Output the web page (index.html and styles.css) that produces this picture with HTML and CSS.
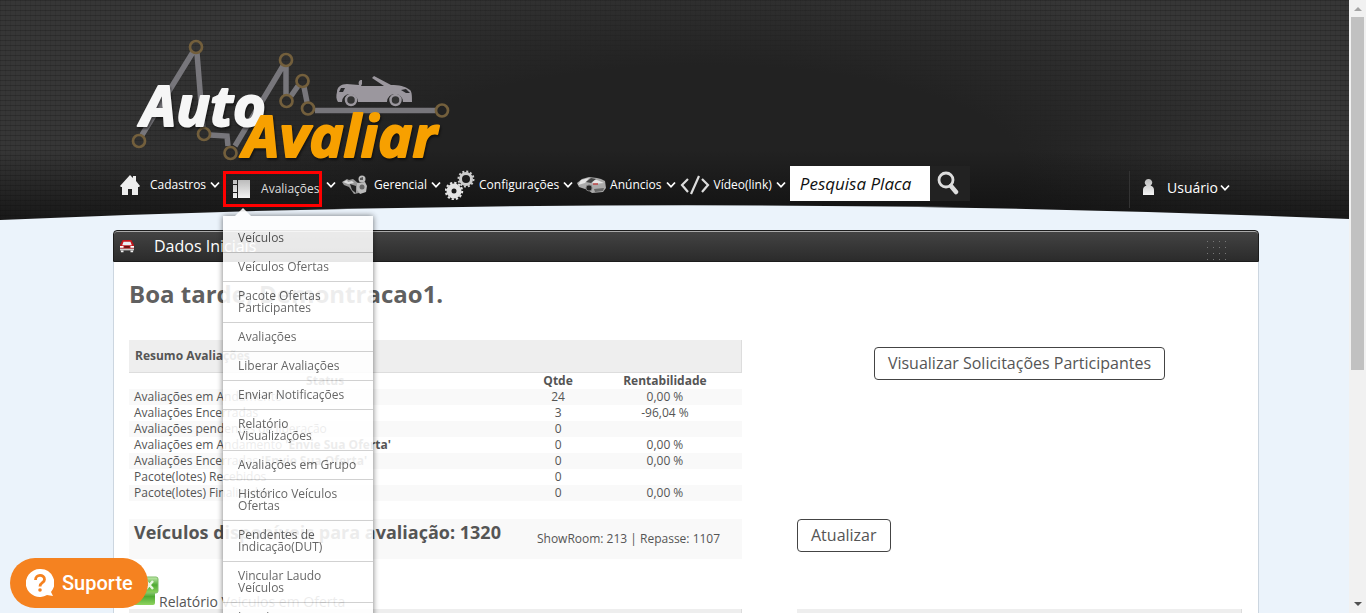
FILE: index.html
```html
<!DOCTYPE html>
<html lang="pt-BR">
<head>
<meta charset="utf-8">
<title>Auto Avaliar</title>
<link rel="stylesheet" href="styles.css">
</head>
<body>
<svg class="defs" width="0" height="0" aria-hidden="true">
  <defs>
    <linearGradient id="metal" x1="0" y1="0" x2="0" y2="1"><stop offset="0" stop-color="#bbb"/><stop offset="1" stop-color="#f4f4f4"/></linearGradient>
    <linearGradient id="green" x1="0" y1="0" x2="0" y2="1"><stop offset="0" stop-color="#c5ecb0"/><stop offset=".5" stop-color="#4faa33"/><stop offset="1" stop-color="#8fd45f"/></linearGradient>
    <symbol id="chev" viewBox="0 0 10 8"><path d="M1 1.5 5 5.8 9 1.5" fill="none" stroke="#fff" stroke-width="1.8"/></symbol>
  </defs>
</svg>
<div class="page">
  <header class="top">
    <svg class="curve" viewBox="0 0 1349 28" preserveAspectRatio="none" aria-hidden="true"><path d="M0 28Q675 -1 1349 27V28Z" fill="#ebf3fb"/></svg>
    <a class="logo" href="#" aria-label="Auto Avaliar">
      <svg width="340" height="135" viewBox="0 0 340 135">
        <g fill="none" stroke="#77767b" stroke-width="5.5">
          <path d="M22 105 73 22M77 23 83 98M90 105 107 106 108 116M115 116 163 36M166 36V66M171 66 178 56M184 57 187 72M195 80.500H315"/>
        </g>
        <g fill="none" stroke="#735f3c" stroke-width="2.700">
          <circle cx="19" cy="111" r="6"/><circle cx="76" cy="17" r="6"/><circle cx="84" cy="104" r="6"/><circle cx="110.500" cy="123" r="6"/><circle cx="166" cy="30" r="6"/><circle cx="166.500" cy="71" r="6"/><circle cx="182.500" cy="51" r="6"/><circle cx="188" cy="78.500" r="6"/><circle cx="322" cy="80.500" r="6"/>
        </g>
        <path fill="#9b979e" d="M217 62c0-5 4-8 10-8l12 1c-1-3 0-5 3-5v4l-1 2h23l-12-8 2-2 17 9c8 0 14 1 19 5 2 2 2 6 2 12h-9a8 8 0 0 0-16 0h-29a8 8 0 0 0-16 0h-4c-2-3-2-6-1-10Z"/>
        <path fill="#28282a" d="m219 62 2-4h4l-2 4Zm62-2 5-1 4 4h-4Z"/>
        <circle cx="231" cy="70" r="5" fill="#333" stroke="#9b979e" stroke-width="2.500"/><circle cx="275.500" cy="70" r="5" fill="#333" stroke="#9b979e" stroke-width="2.500"/>
        <text class="logo-text logo-auto" x="21" y="96">Auto</text>
        <text class="logo-text logo-avaliar" x="123" y="127">Avaliar</text>
      </svg>
    </a>
    <div class="bar">
      <nav class="nav">
        <a class="item first" href="#"><svg width="20" height="20" viewBox="0 0 20 20"><path fill="#eee" d="M10 0 13 3V1h3v5l4 5-1 1h-1v8h-6v-6H8v6H2v-8H1l-1-1Z"/></svg><span class="cad">Cadastros</span><svg class="chev"><use href="#chev"/></svg></a>
        <div class="drop">
          <a class="item current" href="#"><svg width="17" height="18" viewBox="0 0 17 18"><path fill="url(#metal)" d="M0 0h4v4H0zM0 5h4v7H0zM0 13h4v5H0zM5 0h12v18H5z"/></svg><span>Avaliações</span></a>
          <div class="menu">
            <a href="#">Veículos</a>
            <a href="#">Veículos Ofertas</a>
            <a href="#">Pacote Ofertas Participantes</a>
            <a href="#">Avaliações</a>
            <a href="#">Liberar Avaliações</a>
            <a href="#">Enviar Notificações</a>
            <a href="#">Relatório Visualizações</a>
            <a href="#">Avaliações em Grupo</a>
            <a href="#">Histórico Veículos Ofertas</a>
            <a href="#">Pendentes de Indicação(DUT)</a>
            <a href="#">Vincular Laudo Veículos</a>
            <a href="#">Inserir</a>
          </div>
        </div>
        <a class="item" href="#"><svg class="chev"><use href="#chev"/></svg><svg class="wide" width="26" height="20" viewBox="0 0 26 20"><path fill="#999" d="m0 7 5-3 2 1 4-1 5 4 1 10-5 1-5-7-5-2Z"/><path fill="#222" d="m8 9 6 2v7l-4-3Z"/><path fill="#ddd" d="m1 7 4-2 1 2 4-1 2 2-6 1Z"/><circle cx="20" cy="4" r="3.500" fill="#bbb"/><path fill="#bbb" d="m15 8 8-1 2 4-1 6-6 2-3-4Z"/><circle cx="20" cy="12" r="2.500" fill="#666"/><path fill="#555" d="m18 3 3-1v3h-3Z"/></svg><span>Gerencial</span><svg class="chev"><use href="#chev"/></svg></a>
        <a class="item" href="#"><svg width="30" height="30" viewBox="0 0 30 30"><g fill="none" stroke="#ccc"><circle cx="21" cy="9" r="5.500" stroke-width="3"/><circle cx="21" cy="9" r="7.500" stroke-width="2" stroke-dasharray="2 1.927"/></g><g fill="none" stroke="#e2e2e2"><circle cx="9" cy="21" r="5" stroke-width="5"/><circle cx="9" cy="21" r="8.200" stroke-width="2" stroke-dasharray="2.300 1.990"/></g></svg><span>Configurações</span><svg class="chev"><use href="#chev"/></svg></a>
        <a class="item" href="#"><svg width="29" height="18" viewBox="0 0 29 18"><path fill="#aaa" d="M0 7 5 3l7-2 8 1 4 1 4 2 1 7-3 4-11 1-4-3-9-3Z"/><path fill="#e4e4e4" d="m4 4 8-2-4 5-7 2Zm10-1 6 1 7 3-11 1Z"/><path fill="#444" d="m9 6 5-4 5 1-5 4Z"/><circle cx="12" cy="12" r="3" fill="#222" stroke="#777"/><path stroke="#b44" stroke-width="1.500" d="M16 8h5"/><path fill="#666" d="m17 13 10-1-1 3-8 1Z"/></svg><span>Anúncios</span><svg class="chev"><use href="#chev"/></svg></a>
        <a class="item" href="#"><svg width="30" height="20" viewBox="0 0 30 20"><path d="M8 4 2 10l6 7M22 4l6 6-6 7M19 1l-8 18" fill="none" stroke="#ddd" stroke-width="2.200"/></svg><span>Vídeo(link)</span><svg class="chev"><use href="#chev"/></svg></a>
      </nav>
      <form class="search">
        <input type="text" placeholder="Pesquisa Placa" aria-label="Pesquisa Placa">
        <button type="button" aria-label="Pesquisar"><svg width="22" height="24" viewBox="0 0 22 24"><circle cx="9" cy="9" r="7" fill="none" stroke="#ddd" stroke-width="2.800"/><path d="m14 15 5 6" stroke="#ddd" stroke-width="4.500" stroke-linecap="round"/></svg></button>
      </form>
      <a class="user" href="#"><svg width="13" height="17" viewBox="0 0 13 17"><path fill="url(#metal)" d="M6.500 0a3.500 3.500 0 0 1 2 6.500C11 7 12 9 12 11v5H1v-5c0-2 1-4 3.500-4.500A3.500 3.500 0 0 1 6.500 0Z"/></svg><span>Usuário</span><svg class="chev"><use href="#chev"/></svg></a>
    </div>
  </header>
  <main class="panel">
    <div class="panel-head">
      <svg width="16" height="14" viewBox="0 0 18 16"><path fill="#c5161d" d="m4 1 10 0 3 6v4H1V7Z"/><path fill="#e8eef4" d="m5 3 8 0 1.500 4h-11Z"/><path fill="#fff" d="M1 8h4v2H1zM13 8h4v2h-4z"/><path fill="#ccc" d="M1 11h16v2H1z"/><path fill="#eee" d="M2 13h3v2H2zM13 13h3v2h-3z"/><path fill="#611" d="M6 8h6v2H6z"/></svg>
      <h1>Dados Iniciais</h1>
      <span class="grip"></span>
    </div>
    <div class="panel-body">
      <h2>Boa tarde, Demontracao1.</h2>
      <div class="cols">
        <section class="left">
          <h3 class="box-head">Resumo Avaliações</h3>
          <table>
            <thead><tr><th class="c-status">Status</th><th class="c-qty">Qtde</th><th>Rentabilidade</th></tr></thead>
            <tbody>
              <tr><td>Avaliações em Andamento</td><td>24</td><td>0,00 %</td></tr>
              <tr><td>Avaliações Encerradas</td><td>3</td><td>-96,04 %</td></tr>
              <tr><td>Avaliações pendentes de liberação</td><td>0</td><td></td></tr>
              <tr><td>Avaliações em Andamento <b>'Envie Sua Oferta'</b></td><td>0</td><td>0,00 %</td></tr>
              <tr><td>Avaliações Encerradas <b>'Envie Sua Oferta'</b></td><td>0</td><td>0,00 %</td></tr>
              <tr><td>Pacote(lotes) Recebidos</td><td>0</td><td></td></tr>
              <tr><td>Pacote(lotes) Finalizados</td><td>0</td><td>0,00 %</td></tr>
            </tbody>
          </table>
          <div class="total"><strong>Veículos disponíveis para avaliação: 1320</strong><span>ShowRoom: 213 | Repasse: 1107</span></div>
          <a class="report" href="#"><svg width="30" height="30" viewBox="0 0 30 30"><rect x="1" y="12" width="25" height="17" rx="2" fill="url(#green)"/><rect x="4" y="1" width="25" height="16" rx="2" fill="url(#green)" stroke="#7dbb66"/><path d="m17 5 7 8M24 5l-7 8" stroke="#eaf7e2" stroke-width="2.500"/></svg><span>Relatório Veiculos em Oferta</span></a>
          <div class="box-head"></div>
        </section>
        <section class="right">
          <button class="btn mid" type="button">Visualizar Solicitações Participantes</button>
          <button class="btn" type="button">Atualizar</button>
          <div class="box-head"></div>
        </section>
      </div>
    </div>
  </main>
</div>
<div class="scroll" aria-hidden="true"><i class="up"></i><div class="thumb"></div><i class="down"></i></div>
<button class="support" type="button"><svg width="28" height="28" viewBox="0 0 28 28"><path fill="#fff" d="M14 0a14 14 0 1 0 7 26l6 1-2-4A14 14 0 0 0 14 0Z"/><path d="M9.500 11c0-6 9-6 9-.5 0 3.500-4.500 3-4.500 7" fill="none" stroke="#f58220" stroke-width="2.800"/><circle cx="14" cy="21" r="1.800" fill="#f58220"/></svg><span>Suporte</span></button>
</body>
</html>
```
FILE: styles.css
```css
* { box-sizing: border-box; }
body {
  margin: 0;
  height: 100vh;
  overflow: hidden;
  display: flex;
  background: #ebf3fb;
  font: 12px/16px "Open Sans", sans-serif;
  color: #555;
}
a { color: inherit; text-decoration: none; }
h1, h2, h3 { margin: 0; }
svg { flex-shrink: 0; }
button { font-family: inherit; cursor: pointer; }
.defs { position: absolute; }
.page { flex: 1; min-width: 0; }

.top {
  position: relative;
  z-index: 1;
  height: 220px;
  padding: 30px 90px 0 113px;
  background:
    linear-gradient(to bottom, transparent 150px, rgba(10, 10, 10, .65) 215px),
    radial-gradient(ellipse 640px 200px at 52% 75%, #222 50%, rgba(34, 34, 34, 0) 100%),
    repeating-linear-gradient(to bottom, rgba(0, 0, 0, .18) 0 1px, transparent 1px 5px),
    repeating-linear-gradient(to right, rgba(0, 0, 0, .08) 0 1px, transparent 1px 5px),
    #363636;
}
.curve { position: absolute; left: 0; bottom: 0; width: 100%; height: 28px; }
.logo { display: block; width: 340px; height: 135px; margin-left: 7px; }
.logo svg { overflow: visible; }
.logo-text { font-family: "Open Sans", sans-serif; font-weight: 700; font-style: italic; stroke-width: 2px; stroke-linejoin: round; filter: drop-shadow(1px 2px 1px rgba(0, 0, 0, .5)); }
.logo-auto { fill: #f6f6f6; stroke: #f6f6f6; font-size: 56px; }
.logo-avaliar { fill: #f7a000; stroke: #f7a000; font-size: 58px; }

.bar { position: relative; display: flex; align-items: flex-start; height: 44px; padding-left: 7px; color: #fff; }
.nav { display: flex; align-items: flex-start; margin-top: 2px; font-size: 12px; }
.item { display: flex; align-items: center; gap: 4px; height: 36px; white-space: nowrap; margin-right: 4px; }
.first { margin-right: 3px; }
.cad { margin-left: 6px; }
.wide { margin: 0 2px; }
.chev { width: 10px; height: 8px; }
.drop { position: relative; margin-top: 4px; }
.current { width: 99px; border: 3px solid #f00; padding-left: 7px; gap: 11px; color: #ddd; }
.menu {
  position: absolute;
  top: 45px;
  left: 0;
  width: 150px;
  padding-top: 8px;
  background: #fff;
  opacity: .89;
  box-shadow: 0 0 6px rgba(0, 0, 0, .6);
  color: #555;
  font-size: 12px;
  line-height: 12px;
}
.menu::before {
  content: "";
  position: absolute;
  top: -8px;
  left: 12px;
  border: 8px solid transparent;
  border-top: 0;
  border-bottom-color: #fff;
}
.menu a { display: block; padding: 8px 15px; border-bottom: 1px solid #ccc; }
.search { display: flex; height: 35px; margin-top: 1px; }
.search input { width: 140px; border: 0; padding: 0 10px; background: #fff; font: italic 17px "Open Sans", sans-serif; color: #111; }
.search input::placeholder { color: #111; opacity: 1; }
.search button { width: 40px; border: 0; background: #222; padding: 2px 7px 0; text-align: left; }
.user { display: flex; align-items: center; height: 37px; margin: 6px 29px 0 auto; padding: 0 0 4px 12px; border-left: 1px solid #333; font-size: 14px; }
.user span { margin: 0 2px 0 12px; }

.panel { margin: 10px 90px 0 113px; }
.panel-head {
  display: flex;
  align-items: center;
  height: 32px;
  padding: 0 27px 0 5px;
  border: 1px solid #1c1c1c;
  border-radius: 4px 4px 0 0;
  background: linear-gradient(#444, #2b2b2b);
  box-shadow: inset 0 1px #aaa;
  color: #fff;
}
.panel-head h1 { margin-left: 19px; font-size: 16px; font-weight: 400; line-height: 24px; }
.grip {
  width: 24px;
  height: 20px;
  margin: 10px 0 0 auto;
  background: conic-gradient(from 270deg at 1px 1px, #777 90deg, transparent 0) 0 0 / 6px 6px;
}
.panel-body { padding: 16px 16px 17px 15px; background: #fff; border: solid #ccd6e0; border-width: 0 1px; }
h2 { font-size: 24px; line-height: 32px; color: #606060; }
.cols { display: grid; grid-template-columns: 613fr 445fr; gap: 55px; margin-top: 30px; }
.box-head { height: 33px; padding: 8px 6px; background: #eee; border: solid #ddd; border-width: 0 1px 1px 0; font-size: 12px; line-height: 16px; }
table { width: 100%; table-layout: fixed; border-collapse: collapse; }
th, td { height: 16px; padding: 0; text-align: center; line-height: 16px; }
td:first-child { padding-left: 5px; text-align: left; }
th:last-child, td:last-child { padding-right: 7px; }
.c-status { width: 64%; }
.c-qty { width: 12%; }
tbody tr:nth-child(odd) { background: #f9f9f9; }
.total { display: flex; gap: 36px; height: 40px; margin-top: 18px; padding-left: 5px; background: #f9f9f9; }
.total strong { font-size: 18px; line-height: 27px; }
.total span { line-height: 39px; }
.report { display: flex; align-items: flex-end; height: 50px; font-size: 14px; line-height: 14px; }
.report svg { margin-bottom: 3px; }
.right { display: flex; flex-direction: column; align-items: flex-start; padding-top: 7px; }
.btn { height: 33px; padding: 0 13px 1px; border: 1px solid #444; border-radius: 4px; background: #fff; font-size: 16px; color: #555; white-space: nowrap; }
.btn.mid { align-self: center; margin-bottom: 139px; }
.right .box-head { align-self: stretch; margin-top: 57px; }

.scroll { display: flex; flex-direction: column; align-items: center; width: 17px; padding: 7px 0; background: #f1f1f1; }
.thumb { width: 13px; height: 59%; margin-top: 6px; background: #c1c1c1; }
.up, .down { border: 4px solid transparent; }
.up { border-top: 0; border-bottom-color: #a3a3a3; }
.down { margin-top: auto; border-bottom: 0; border-top-color: #505050; }

.support {
  position: fixed;
  z-index: 2;
  left: 10px;
  bottom: 5px;
  display: flex;
  align-items: center;
  gap: 8px;
  height: 50px;
  padding: 0 15px 0 16px;
  border: 0;
  border-radius: 25px;
  background: #f58220;
  color: #fff;
  font: 500 20px Roboto, sans-serif;
}
```
